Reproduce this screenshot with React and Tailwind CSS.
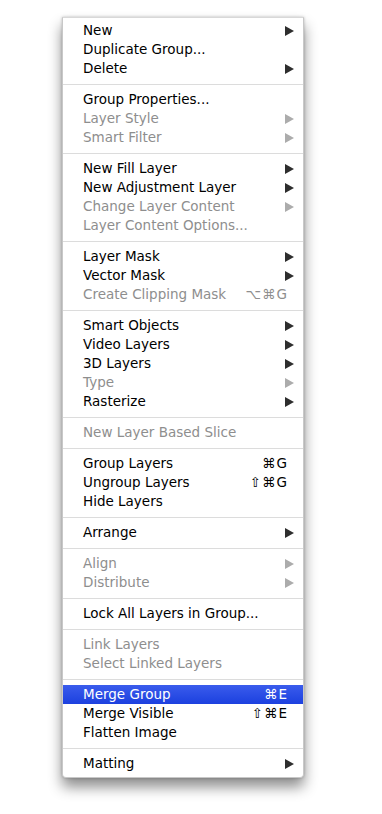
import React from 'react';

// Menu de capas (estilo Mac OS X)
const sections = [
  [
    { label: 'New', sub: true },
    { label: 'Duplicate Group...' },
    { label: 'Delete', sub: true },
  ],
  [
    { label: 'Group Properties...' },
    { label: 'Layer Style', sub: true, disabled: true },
    { label: 'Smart Filter', sub: true, disabled: true },
  ],
  [
    { label: 'New Fill Layer', sub: true },
    { label: 'New Adjustment Layer', sub: true },
    { label: 'Change Layer Content', sub: true, disabled: true },
    { label: 'Layer Content Options...', disabled: true },
  ],
  [
    { label: 'Layer Mask', sub: true },
    { label: 'Vector Mask', sub: true },
    { label: 'Create Clipping Mask', shortcut: '⌥⌘G', disabled: true },
  ],
  [
    { label: 'Smart Objects', sub: true },
    { label: 'Video Layers', sub: true },
    { label: '3D Layers', sub: true },
    { label: 'Type', sub: true, disabled: true },
    { label: 'Rasterize', sub: true },
  ],
  [{ label: 'New Layer Based Slice', disabled: true }],
  [
    { label: 'Group Layers', shortcut: '⌘G' },
    { label: 'Ungroup Layers', shortcut: '⇧⌘G' },
    { label: 'Hide Layers' },
  ],
  [{ label: 'Arrange', sub: true }],
  [
    { label: 'Align', sub: true, disabled: true },
    { label: 'Distribute', sub: true, disabled: true },
  ],
  [{ label: 'Lock All Layers in Group...' }],
  [
    { label: 'Link Layers', disabled: true },
    { label: 'Select Linked Layers', disabled: true },
  ],
  [
    { label: 'Merge Group', shortcut: '⌘E', active: true },
    { label: 'Merge Visible', shortcut: '⇧⌘E' },
    { label: 'Flatten Image' },
  ],
  [{ label: 'Matting', sub: true }],
];

const Arrow = ({ disabled, active }) => (
  <svg width="9" height="10" viewBox="0 0 9 10" className="shrink-0">
    <path d="M0 0L9 5L0 10Z" fill={active ? '#ffffff' : disabled ? '#acacac' : '#2e2e2e'} />
  </svg>
);

const MenuItem = ({ item }) => {
  const color = item.active ? 'text-white' : item.disabled ? 'text-[#8e8e8e]' : 'text-black';
  return (
    <div
      className={`flex items-center h-[19px] pl-[20px] ${item.sub ? 'pr-[9px]' : 'pr-[15px]'} ${
        item.active ? 'bg-[linear-gradient(#3a5cec,#1c40df)]' : ''
      }`}
    >
      <span className={`flex-1 whitespace-nowrap ${color}`}>{item.label}</span>
      {item.shortcut && <span className={`${color} tracking-[1px]`}>{item.shortcut}</span>}
      {item.sub && <Arrow disabled={item.disabled} active={item.active} />}
    </div>
  );
};

const App = () => {
  return (
    <div className="min-h-screen bg-white pt-[17px] pl-[62px]">
      <div
        className="w-[242px] bg-white border border-[#c8c8c8] border-t-[#d8d8d8] rounded-b-[4px] pt-[3px] pb-[4px] shadow-[0_9px_14px_rgba(0,0,0,0.45),0_0_3px_rgba(0,0,0,0.25)] text-[13.5px] leading-[19px]"
        style={{ fontFamily: '"DejaVu Sans", sans-serif' }}
      >
        {sections.map((section, i) => (
          <div key={i}>
            {i > 0 && (
              <div className="pt-[6px] pb-[5px]">
                <div className="h-px bg-[#dcdcdc]" />
              </div>
            )}
            {section.map((item) => (
              <MenuItem key={item.label} item={item} />
            ))}
          </div>
        ))}
      </div>
    </div>
  );
};

export default App;
